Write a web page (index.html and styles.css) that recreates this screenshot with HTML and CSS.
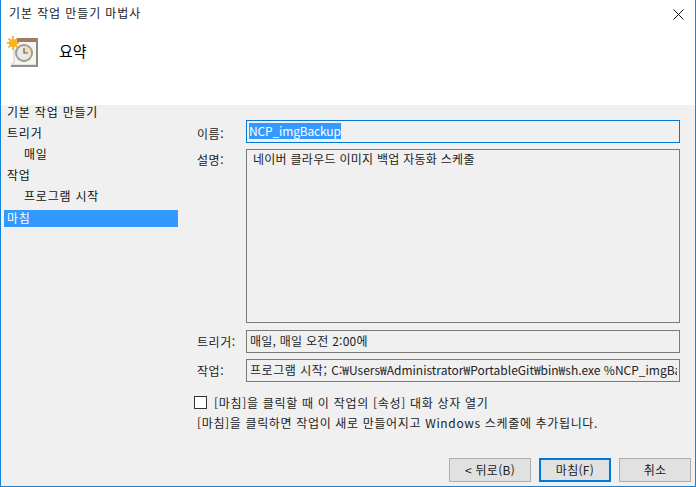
FILE: index.html
```html
<!DOCTYPE html>
<html lang="ko">
<head>
<meta charset="utf-8">
<title>기본 작업 만들기 마법사</title>
<link rel="stylesheet" href="styles.css">
</head>
<body>
<div class="window">
  <div class="top">
    <div class="titlebar">
      <span class="title">기본 작업 만들기 마법사</span>
      <svg class="close" width="11" height="11" viewBox="0 0 11 11"><path d="M.5.5l10 10M10.500.5l-10 10" stroke="#111" stroke-width="1" fill="none"/></svg>
    </div>
    <div class="banner">
      <svg class="task-icon" width="32" height="32" viewBox="0 0 32 32">
        <rect x="6" y="4" width="25" height="24" fill="#f7f5ee"/>
        <rect x="10" y="2" width="21" height="4" fill="#a17a63"/>
        <rect x="29" y="2" width="2" height="29" fill="#8a8a8a"/>
        <path d="M6 6v20l-2 1v4h25v-3H8V6z" fill="#e6e3da"/>
        <rect x="4" y="29" width="27" height="2" fill="#8f8f8f"/>
        <circle cx="17" cy="17" r="9" fill="#9c9c98"/>
        <circle cx="17" cy="17" r="7" fill="#e9e9e6"/>
        <path d="M17 17V10a7 7 0 0 1 7 7z" fill="#f3dfae"/>
        <path d="M17 12v5h4" stroke="#5f5f5f" stroke-width="1.2" fill="none"/>
        <path d="M6 0v3M6 11v3M0 7h3M9 7h3M1.500 2.500l2 2M8.500 9.500l2 2M10.500 2.500l-2 2M3.500 9.500l-2 2" stroke="#f29a12" stroke-width="1.400"/>
        <circle cx="6" cy="7" r="4" fill="#fbb315"/>
      </svg>
      <h1 class="heading">요약</h1>
    </div>
  </div>
  <div class="main">
    <nav class="steps">
      <div class="step top-step">기본 작업 만들기</div>
      <div class="step">트리거</div>
      <div class="step sub">매일</div>
      <div class="step">작업</div>
      <div class="step sub">프로그램 시작</div>
      <div class="step current">마침</div>
    </nav>
    <div class="form">
      <div class="row">
        <label class="lab lab-name">이름:</label>
        <div class="field focus"><span class="sel">NCP_imgBackup</span></div>
      </div>
      <div class="row row-desc">
        <label class="lab lab-desc">설명:</label>
        <div class="field area">네이버 클라우드 이미지 백업 자동화 스케줄</div>
      </div>
      <div class="row">
        <label class="lab lab-mid">트리거:</label>
        <div class="field">매일, 매일 오전 2:00에</div>
      </div>
      <div class="row">
        <label class="lab lab-mid">작업:</label>
        <div class="field"><span class="clip">프로그램 시작; <span class="lat">C:₩Users₩Administrator₩PortableGit₩bin₩sh.exe %NCP_imgBackup%</span></span></div>
      </div>
      <div class="check-row">
        <span class="checkbox"></span>
        <span>[마침]을 클릭할 때 이 작업의 [속성] 대화 상자 열기</span>
      </div>
      <p class="note">[마침]을 클릭하면 작업이 새로 만들어지고 Windows 스케줄에 추가됩니다.</p>
    </div>
  </div>
  <div class="footer">
    <button class="btn back">&lt; 뒤로(B)</button>
    <button class="btn primary">마침(F)</button>
    <button class="btn">취소</button>
  </div>
</div>
</body>
</html>
```

FILE: styles.css
```css
* { box-sizing: border-box; }
html, body { margin: 0; height: 100%; background: #fff; }
body { font-family: "Noto Sans CJK KR", "Noto Sans", sans-serif; font-size: 12px; color: #111; overflow: hidden; }
.window { width: 696px; height: 487px; display: flex; flex-direction: column; background: #f0f0f0; border-left: 1px solid #1883d7; border-right: 1px solid #1883d7; border-bottom: 1px solid #1883d7; }
.top { background: #fff; height: 105px; flex: none; }
.titlebar { height: 29px; display: flex; justify-content: space-between; align-items: center; padding: 0 9px 3px 8px; }
.title { font-size: 12px; line-height: 18px; letter-spacing: .9px; color: #222; }
.close { margin-top: 3px; margin-right: 2px; }
.banner { display: flex; align-items: flex-start; padding: 7px 0 0 6px; }
.task-icon { flex: none; }
.heading { margin: 5px 0 0 20px; font-size: 15px; line-height: 20px; font-weight: 400; color: #000; }
.main { flex: 1; display: flex; min-height: 0; }
.steps { width: 177px; flex: none; padding: 0 0 0 3px; }
.step { height: 21px; line-height: 18px; padding-left: 3px; letter-spacing: .8px; color: #111; }
.top-step { height: 18px; margin-top: -1px; line-height: 15px; margin-bottom: 2px; }
.step.sub { padding-left: 20px; }
.step.current { height: 17px; margin-top: 2px; line-height: 15px; background: #3399ff; color: #fff; }
.form { flex: 1; display: flex; flex-direction: column; padding: 15px 15px 0 19px; min-width: 0; }
.row { display: flex; height: 23px; margin-bottom: 6px; flex: none; }
.row-desc { height: 174px; margin-bottom: 7px; }
.lab { width: 49px; flex: none; letter-spacing: .55px; line-height: 18px; color: #222; }
.lab-name { padding-top: 5px; }
.lab-desc { padding-top: 2px; }
.lab-mid { padding-top: 3px; }
.field { flex: 1; min-width: 0; border: 1px solid #7a7a7a; background: #f0f0f0; padding: 0 2px 0 3px; line-height: 20px; letter-spacing: .25px; white-space: nowrap; overflow: hidden; color: #222; }
.area { padding: 0 0 0 6px; line-height: 18px; letter-spacing: .27px; }
.field.focus { border-color: #0078d7; line-height: 19px; padding-left: 2px; }
.sel { background: #3399ff; color: #fff; display: inline-block; line-height: 16px; height: 16px; margin-top: 1px; letter-spacing: -.15px; }
.clip { display: block; overflow: hidden; letter-spacing: .55px; }
.lat { letter-spacing: 0; }
.check-row { display: flex; align-items: center; margin: 6px 0 0 -3px; height: 16px; letter-spacing: .7px; color: #222; gap: 7px; }
.checkbox { width: 13px; height: 13px; border: 1px solid #333; background: #fff; flex: none; }
.note { margin: 4px 0 0 0; line-height: 18px; letter-spacing: .65px; color: #222; white-space: nowrap; }
.footer { flex: none; display: flex; justify-content: flex-end; gap: 8px; padding: 0 4px 4px 0; }
.btn { width: 72px; height: 24px; background: #e1e1e1; border: 1px solid #adadad; font: inherit; color: #222; padding: 0; line-height: 18px; letter-spacing: .3px; }
.btn.back { width: 82px; }
.btn.primary { border: 2px solid #0078d7; }
```
